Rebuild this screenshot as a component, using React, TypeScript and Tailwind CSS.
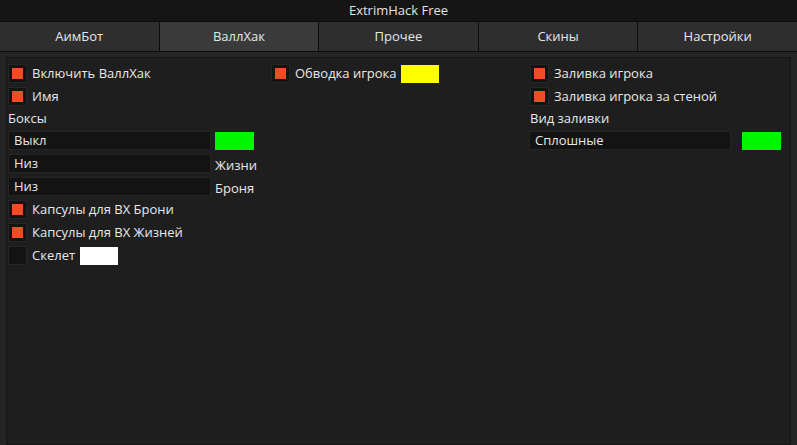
import React from "react";

const font = { fontFamily: '"Open Sans", "Noto Sans", sans-serif' };

function Check({ on = true, label, children }: { on?: boolean; label: string; children?: React.ReactNode }) {
  return (
    <div className="h-[23px] flex items-center">
      <div className="w-[19px] h-[19px] bg-[#131313] border border-[#262626] flex items-center justify-center">
        {on && <div className="w-[11px] h-[11px] bg-[#f04d25]" />}
      </div>
      <span className="ml-[5px] text-[13px] text-[#e8e8e8] leading-none">{label}</span>
      {children}
    </div>
  );
}

function Field({ value, w = "w-[203px]", children }: { value: string; w?: string; children?: React.ReactNode }) {
  return (
    <div className="h-[23px] flex items-center">
      <div className={`${w} h-[19px] bg-[#131313] border border-[#242424] flex items-center pl-[5px] pb-[1px] text-[13px] text-[#e8e8e8] leading-none`}>
        {value}
      </div>
      {children}
    </div>
  );
}

const tabs = ["АимБот", "ВаллХак", "Прочее", "Скины", "Настройки"];

export default function App() {
  return (
    <div className="w-[797px] h-[445px] bg-[#1d1d1d] flex flex-col overflow-hidden" style={font}>
      <div className="h-[21px] bg-[#151515] flex items-center justify-center text-[13px] text-[#e2e2e2] leading-none">
        ExtrimHack Free
      </div>
      <div className="h-[31px] flex bg-[#0d0d0d] border-y border-[#0d0d0d] gap-px">
        {tabs.map((t, i) => (
          <div
            key={t}
            className={`flex-1 flex items-center justify-center text-[13px] text-[#e6e6e6] leading-none ${
              i === 1 ? "bg-[#3a3a3a]" : "bg-[#2e2e2e]"
            }`}
          >
            {t}
          </div>
        ))}
      </div>
      <div className="flex-1 bg-[#252525] px-[6px] pt-[5px] flex flex-col">
        <div className="flex-1 bg-[#1e1e1e] border border-[#161616] flex pl-[1px] pt-[4px]">
          <div className="w-[263px] flex flex-col">
            <Check label="Включить ВаллХак" />
            <Check label="Имя" />
            <div className="h-[21px] flex items-center text-[13px] text-[#e8e8e8] leading-none">Боксы</div>
            <Field value="Выкл">
              <div className="ml-[4px] w-[39px] h-[18px] bg-[#00f500]" />
            </Field>
            <Field value="Низ">
              <span className="ml-[4px] mt-[4px] text-[13px] text-[#e8e8e8] leading-none">Жизни</span>
            </Field>
            <Field value="Низ">
              <span className="ml-[4px] mt-[4px] text-[13px] text-[#e8e8e8] leading-none">Броня</span>
            </Field>
            <Check label="Капсулы для ВХ Брони" />
            <Check label="Капсулы для ВХ Жизней" />
            <Check on={false} label="Скелет">
              <div className="ml-[5px] w-[38px] h-[18px] bg-white" />
            </Check>
          </div>
          <div className="w-[259px] flex flex-col">
            <Check label="Обводка игрока">
              <div className="ml-[4px] w-[38px] h-[18px] bg-[#ffff00]" />
            </Check>
          </div>
          <div className="flex-1 flex flex-col">
            <Check label="Заливка игрока" />
            <Check label="Заливка игрока за стеной" />
            <div className="h-[21px] flex items-center text-[13px] text-[#e8e8e8] leading-none">Вид заливки</div>
            <div className="-ml-[1px]">
              <Field value="Сплошные" w="w-[202px]">
                <div className="ml-[11px] w-[39px] h-[18px] bg-[#00f500]" />
              </Field>
            </div>
          </div>
        </div>
      </div>
    </div>
  );
}
